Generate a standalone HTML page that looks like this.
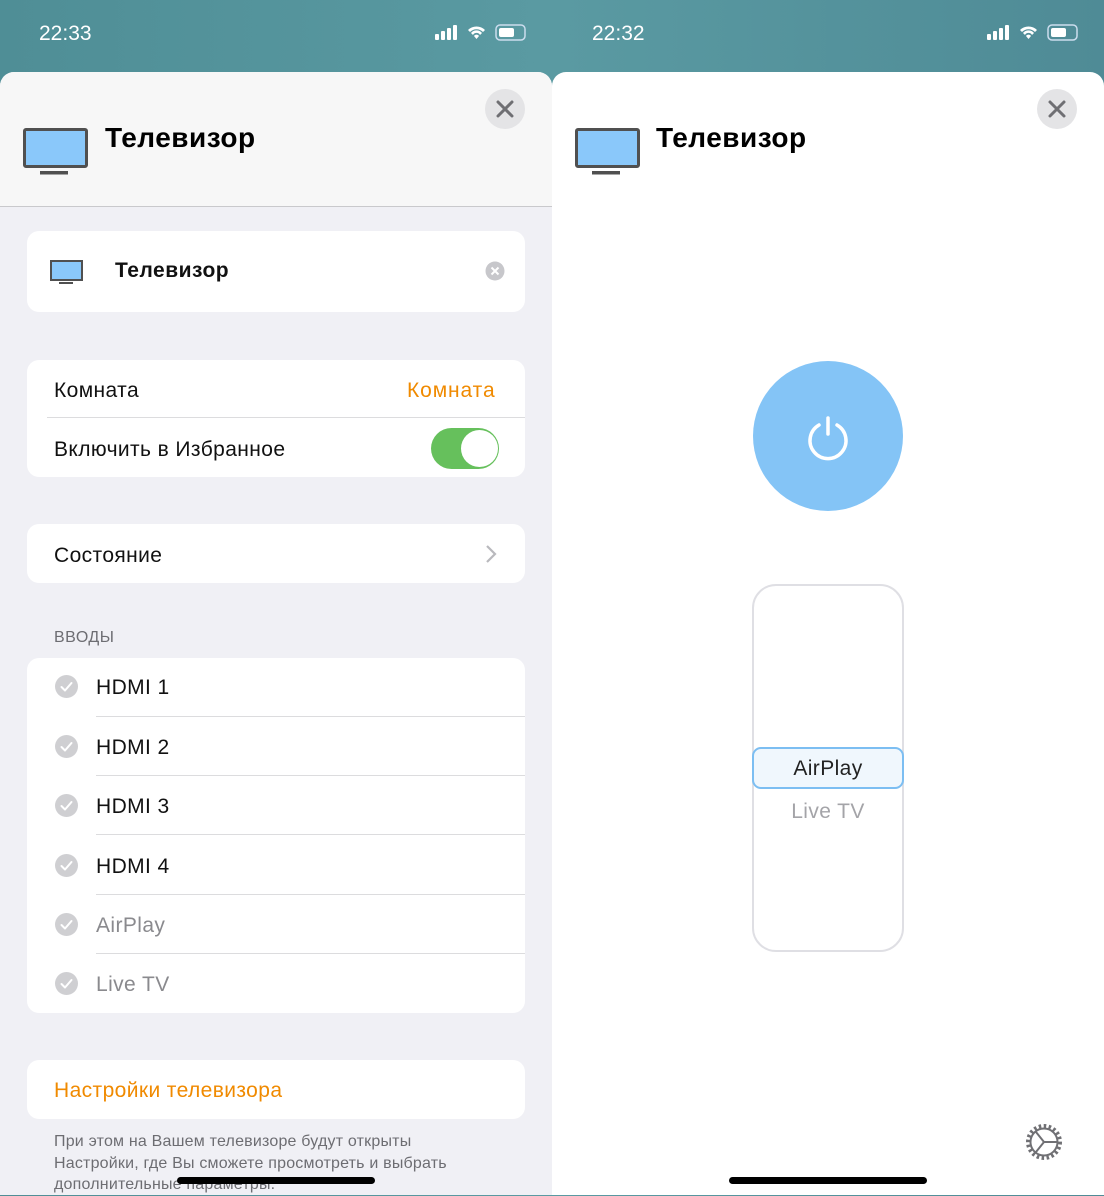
<!DOCTYPE html>
<html><head><meta charset="utf-8"><style>
*{margin:0;padding:0;box-sizing:border-box}
body{width:1104px;height:1195px;overflow:hidden;position:relative;font-family:"Liberation Sans","Noto Sans CJK SC",sans-serif;background:linear-gradient(90deg,#4f8e96,#5a9aa2 50%,#4f8b96);}
.a{position:absolute}
.time{color:#fff;font-size:21px;top:22px}
.sheet{top:72px;height:1123px;border-radius:14px 14px 0 0;overflow:hidden}
.card{position:absolute;left:27px;width:498px;background:#fff;border-radius:12px}
.t{position:absolute;font-size:21px;color:#111;letter-spacing:0.4px;margin-top:1px}
.close{width:40px;height:40px;border-radius:50%;background:#e4e4e6;top:89px}
.chk{position:absolute;left:55px;width:23px;height:23px}
.line{position:absolute;height:1px;background:#dcdcde}
</style></head><body>
<div class="a time" style="left:39px">22:33</div>
<div class="a time" style="left:592px">22:32</div>
<svg class="a" style="left:434px;top:24px" width="96" height="18"><g fill="#fff"><rect x="1" y="10" width="4" height="6" rx="1"/><rect x="7" y="7" width="4" height="9" rx="1"/><rect x="13" y="4" width="4" height="12" rx="1"/><rect x="19" y="1" width="4" height="15" rx="1"/><path d="M34 6a12 12 0 0 1 17 0l-2 2a9 9 0 0 0-13 0zM37 9a7 7 0 0 1 11 0l-2 2a4 4 0 0 0-7 0zM40 12l2.5 3 2.5-3a3 3 0 0 0-5 0z"/></g><rect x="62" y="1" width="29" height="15" rx="4" fill="none" stroke="#cde" stroke-width="1.5"/><rect x="65" y="4" width="15" height="9" rx="2" fill="#fff"/></svg>
<svg class="a" style="left:986px;top:24px" width="96" height="18"><g fill="#fff"><rect x="1" y="10" width="4" height="6" rx="1"/><rect x="7" y="7" width="4" height="9" rx="1"/><rect x="13" y="4" width="4" height="12" rx="1"/><rect x="19" y="1" width="4" height="15" rx="1"/><path d="M34 6a12 12 0 0 1 17 0l-2 2a9 9 0 0 0-13 0zM37 9a7 7 0 0 1 11 0l-2 2a4 4 0 0 0-7 0zM40 12l2.5 3 2.5-3a3 3 0 0 0-5 0z"/></g><rect x="62" y="1" width="29" height="15" rx="4" fill="none" stroke="#cde" stroke-width="1.5"/><rect x="65" y="4" width="15" height="9" rx="2" fill="#fff"/></svg>

<div class="a sheet" style="left:0;width:552px;background:#f0f0f5">
 <div class="a" style="left:0;top:0;width:552px;height:135px;background:#f7f7f7;border-bottom:1.5px solid #c9c9cc"></div>
</div>
<div class="a close" style="left:485px"></div>
<svg class="a" style="left:485px;top:89px" width="40" height="40"><path d="M13 13L27 27M27 13L13 27" stroke="#6f6f73" stroke-width="3" stroke-linecap="round"/></svg>
<svg class="a" style="left:23px;top:128px" width="66" height="48"><rect x="1.5" y="1.5" width="62" height="37" rx="1.5" fill="#8ac8fa" stroke="#505050" stroke-width="3"/><rect x="17" y="43" width="28" height="3.5" fill="#505050"/></svg>
<div class="a" style="left:105px;top:122px;font-size:28px;font-weight:bold;color:#000;letter-spacing:0.5px">Телевизор</div>

<div class="card" style="top:231px;height:81px"></div>
<svg class="a" style="left:50px;top:260px" width="34" height="26"><rect x="1" y="1" width="31" height="19" fill="#8ac8fa" stroke="#505050" stroke-width="2"/><rect x="9" y="22" width="14" height="2" fill="#505050"/></svg>
<div class="a" style="left:115px;top:259px;font-size:21px;font-weight:bold;color:#111;letter-spacing:0.5px">Телевизор</div>
<svg class="a" style="left:485px;top:261px" width="20" height="20"><circle cx="10" cy="10" r="9.5" fill="#c7c7cb"/><path d="M6.5 6.5l7 7M13.5 6.5l-7 7" stroke="#fff" stroke-width="2"/></svg>

<div class="card" style="top:360px;height:117px"></div>
<div class="t" style="left:54px;top:378px">Комната</div>
<div class="t" style="left:407px;top:378px;color:#f08a00;letter-spacing:0.9px">Комната</div>
<div class="line" style="left:47px;top:417px;width:478px"></div>
<div class="t" style="left:54px;top:437px">Включить в Избранное</div>
<div class="a" style="left:431px;top:428px;width:68px;height:41px;border-radius:21px;background:#66c05c"></div>
<div class="a" style="left:461px;top:430px;width:37px;height:37px;border-radius:50%;background:#fff"></div>

<div class="card" style="top:524px;height:59px"></div>
<div class="t" style="left:54px;top:543px">Состояние</div>
<svg class="a" style="left:484px;top:544px" width="14" height="20"><path d="M3 2l8 8-8 8" fill="none" stroke="#b9b9bd" stroke-width="2.2"/></svg>

<div class="a" style="left:54px;top:629px;font-size:16px;color:#6d6d72;letter-spacing:0.5px">ВВОДЫ</div>
<div class="card" style="top:658px;height:355px"></div>
<svg width="0" height="0" style="position:absolute"><defs><g id="ck"><circle cx="11.5" cy="11.5" r="11.5" fill="#cfcfd2"/><path d="M6.5 12l3.5 3.5 6.5-7.5" fill="none" stroke="#fff" stroke-width="2" stroke-linecap="round" stroke-linejoin="round"/></g></defs></svg>
<svg class="chk" style="top:675px"><use href="#ck"/></svg><div class="t" style="left:96px;top:675px">HDMI 1</div><div class="line" style="left:96px;top:716px;width:429px"></div>
<svg class="chk" style="top:735px"><use href="#ck"/></svg><div class="t" style="left:96px;top:735px">HDMI 2</div><div class="line" style="left:96px;top:775px;width:429px"></div>
<svg class="chk" style="top:794px"><use href="#ck"/></svg><div class="t" style="left:96px;top:794px">HDMI 3</div><div class="line" style="left:96px;top:834px;width:429px"></div>
<svg class="chk" style="top:854px"><use href="#ck"/></svg><div class="t" style="left:96px;top:854px">HDMI 4</div><div class="line" style="left:96px;top:894px;width:429px"></div>
<svg class="chk" style="top:913px"><use href="#ck"/></svg><div class="t" style="left:96px;top:913px;color:#8a8a8e">AirPlay</div><div class="line" style="left:96px;top:953px;width:429px"></div>
<svg class="chk" style="top:972px"><use href="#ck"/></svg><div class="t" style="left:96px;top:972px;color:#8a8a8e">Live TV</div>

<div class="card" style="top:1060px;height:59px"></div>
<div class="t" style="left:54px;top:1078px;color:#f08a00">Настройки телевизора</div>
<div class="a" style="left:54px;top:1131px;font-size:16px;line-height:21.5px;color:#6d6d72;width:445px;letter-spacing:0.2px">При этом на Вашем телевизоре будут открыты Настройки, где Вы сможете просмотреть и выбрать дополнительные параметры.</div>
<div class="a" style="left:177px;top:1177px;width:198px;height:7px;border-radius:4px;background:#000"></div>

<div class="a sheet" style="left:552px;width:552px;background:#fff"></div>
<div class="a close" style="left:1037px"></div>
<svg class="a" style="left:1037px;top:89px" width="40" height="40"><path d="M13 13L27 27M27 13L13 27" stroke="#6f6f73" stroke-width="3" stroke-linecap="round"/></svg>
<svg class="a" style="left:575px;top:128px" width="66" height="48"><rect x="1.5" y="1.5" width="62" height="37" rx="1.5" fill="#8ac8fa" stroke="#505050" stroke-width="3"/><rect x="17" y="43" width="28" height="3.5" fill="#505050"/></svg>
<div class="a" style="left:656px;top:122px;font-size:28px;font-weight:bold;color:#000;letter-spacing:0.5px">Телевизор</div>

<div class="a" style="left:753px;top:361px;width:150px;height:150px;border-radius:50%;background:#84c4f6"></div>
<svg class="a" style="left:803px;top:411px" width="50" height="50"><path d="M16 14a18 18 0 1 0 18 0" fill="none" stroke="#fff" stroke-width="3.5" stroke-linecap="round"/><path d="M25 7v16" stroke="#fff" stroke-width="3.5" stroke-linecap="round"/></svg>

<div class="a" style="left:752px;top:584px;width:152px;height:368px;border:2px solid #dfdfe4;border-radius:24px"></div>
<div class="a" style="left:752px;top:747px;width:152px;height:42px;border:2px solid #7cbef2;border-radius:9px;background:#f0f7fd;text-align:center;font-size:21px;line-height:40px;color:#222;letter-spacing:0.4px">AirPlay</div>
<div class="a" style="left:752px;top:800px;width:152px;text-align:center;font-size:21px;color:#a4a4a8;letter-spacing:0.4px">Live TV</div>

<svg class="a" style="left:1023px;top:1121px" width="42" height="42"><g fill="none" stroke="#707074"><circle cx="21" cy="21" r="16" stroke-width="4" stroke-dasharray="2.5 2.5"/><circle cx="21" cy="21" r="13.5" stroke-width="2"/><path d="M21 21L13 11M21 21L13 31M21 21h13" stroke-width="2"/></g></svg>
<div class="a" style="left:729px;top:1177px;width:198px;height:7px;border-radius:4px;background:#000"></div>
</body></html>
